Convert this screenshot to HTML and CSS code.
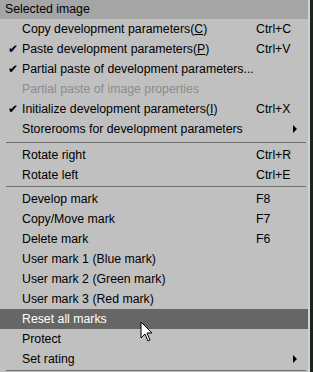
FILE: index.html
```html
<!DOCTYPE html>
<html>
<head>
<meta charset="utf-8">
<link rel="stylesheet" href="styles.css">
</head>
<body>
<div class="frame">
  <div class="menu">
    <div class="header">Selected image</div>
    <div class="item"><span class="chk"></span><span class="lbl">Copy development parameters(<u>C</u>)</span><span class="key">Ctrl+C</span></div>
    <div class="item"><span class="chk">✔</span><span class="lbl">Paste development parameters(<u>P</u>)</span><span class="key">Ctrl+V</span></div>
    <div class="item"><span class="chk">✔</span><span class="lbl">Partial paste of development parameters...</span><span class="key"></span></div>
    <div class="item disabled"><span class="chk"></span><span class="lbl">Partial paste of image properties</span><span class="key"></span></div>
    <div class="item"><span class="chk">✔</span><span class="lbl">Initialize development parameters(<u>I</u>)</span><span class="key">Ctrl+X</span></div>
    <div class="item"><span class="chk"></span><span class="lbl">Storerooms for development parameters</span><span class="key"></span><span class="arrow"></span></div>
    <div class="sep"></div>
    <div class="item"><span class="chk"></span><span class="lbl">Rotate right</span><span class="key">Ctrl+R</span></div>
    <div class="item"><span class="chk"></span><span class="lbl">Rotate left</span><span class="key">Ctrl+E</span></div>
    <div class="sep sep-small"></div>
    <div class="item"><span class="chk"></span><span class="lbl">Develop mark</span><span class="key">F8</span></div>
    <div class="item"><span class="chk"></span><span class="lbl">Copy/Move mark</span><span class="key">F7</span></div>
    <div class="item"><span class="chk"></span><span class="lbl">Delete mark</span><span class="key">F6</span></div>
    <div class="item"><span class="chk"></span><span class="lbl">User mark 1 (Blue mark)</span><span class="key"></span></div>
    <div class="item"><span class="chk"></span><span class="lbl">User mark 2 (Green mark)</span><span class="key"></span></div>
    <div class="item"><span class="chk"></span><span class="lbl">User mark 3 (Red mark)</span><span class="key"></span></div>
    <div class="item active"><span class="chk"></span><span class="lbl">Reset all marks</span><span class="key"></span>
      <svg class="cursor" width="14" height="22" viewBox="0 0 14 22"><path d="M1 1 L1 17 L5 13 L8 20 L10 19 L7 12 L12 12 Z" fill="#fff" stroke="#000" stroke-width="1"/></svg>
    </div>
    <div class="item"><span class="chk"></span><span class="lbl">Protect</span><span class="key"></span></div>
    <div class="item"><span class="chk"></span><span class="lbl">Set rating</span><span class="key"></span><span class="arrow"></span></div>
    <div class="sep sep-small"></div>
  </div>
  <div class="edge"></div>
</div>
</body>
</html>
```
FILE: styles.css
```css
html, body {
  margin: 0;
  padding: 0;
  background: #1e241c;
}
body {
  width: 313px;
  height: 372px;
  overflow: hidden;
  font-family: "Liberation Sans", Arial, sans-serif;
  font-size: 12.3px;
  color: #000;
}
.frame {
  display: flex;
  height: 372px;
}
.menu {
  width: 308px;
  background: #c0c0c0;
  display: flex;
  flex-direction: column;
  flex: none;
}
.edge {
  width: 2px;
  background: #d2d2d2;
  flex: none;
}
.header {
  height: 19px;
  line-height: 18px;
  background: #a5a5a5;
  padding-left: 5px;
  color: #000;
  flex: none;
}
.item {
  position: relative;
  height: 20px;
  line-height: 20px;
  display: flex;
  align-items: center;
  flex: none;
}
.chk {
  width: 22px;
  padding-left: 8px;
  box-sizing: border-box;
  font-size: 12px;
  font-family: "DejaVu Sans", sans-serif;
  flex: none;
}
.lbl {
  flex: 1;
  white-space: nowrap;
}
.lbl u {
  text-decoration: underline;
}
.key {
  width: 52px;
  flex: none;
}
.arrow {
  position: absolute;
  left: 293px;
  top: 6px;
  width: 0;
  height: 0;
  border-top: 4px solid transparent;
  border-bottom: 4px solid transparent;
  border-left: 4px solid #000;
}
.disabled {
  color: #8c8c8c;
}
.active {
  background: #666666;
  color: #fff;
}
.sep {
  height: 6px;
  flex: none;
  display: flex;
  align-items: center;
  padding: 0 2px 0 6px;
}
.sep-small {
  height: 4px;
  align-items: flex-start;
  padding-top: 1px;
  box-sizing: border-box;
}
.sep::before {
  content: "";
  display: block;
  width: 100%;
  height: 1px;
  background: #6e6e6e;
}
.cursor {
  position: absolute;
  left: 140px;
  top: 12px;
}
```
